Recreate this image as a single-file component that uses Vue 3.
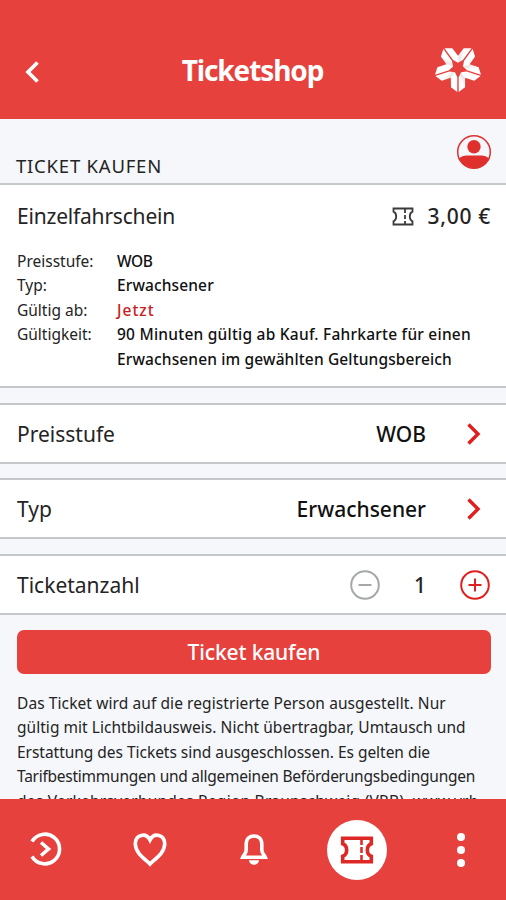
<script setup>
const details = [
  { label: 'Preisstufe:', lines: [{ text: 'WOB', track: -0.4 }] },
  { label: 'Typ:', lines: [{ text: 'Erwachsener', track: 0.12 }] },
  { label: 'Gültig ab:', lines: [{ text: 'Jetzt', track: 1 }], accent: true },
  {
    label: 'Gültigkeit:',
    lines: [
      { text: '90 Minuten gültig ab Kauf. Fahrkarte für einen', track: 0.23 },
      { text: 'Erwachsenen im gewählten Geltungsbereich', track: 0.13 },
    ],
  },
]
const options = [
  { label: 'Preisstufe', value: 'WOB' },
  { label: 'Typ', value: 'Erwachsener' },
]
const notice = [
  { text: 'Das Ticket wird auf die registrierte Person ausgestellt. Nur', track: 0.09 },
  { text: 'gültig mit Lichtbildausweis. Nicht übertragbar, Umtausch und', track: 0.04 },
  { text: 'Erstattung des Tickets sind ausgeschlossen. Es gelten die', track: -0.03 },
  { text: 'Tarifbestimmungen und allgemeinen Beförderungsbedingungen', track: -0.25 },
  { text: 'des Verkehrsverbundes Region Braunschweig (VRB), www.vrb', track: 0.24 },
]
const arms = [0, 72, 144, 216, 288]
</script>

<template>
  <div class="screen">
    <header class="topbar">
      <svg class="back" width="20" height="24" viewBox="0 0 20 24"><path d="M15.500 2.500 6 12l9.500 9.500" /></svg>
      <h1>Ticketshop</h1>
      <svg class="logo" width="50" height="50" viewBox="-25 -25 50 50">
        <defs>
          <linearGradient id="fold" x1="0" x2="1" y1="0" y2="0">
            <stop offset="0" stop-color="#fff" />
            <stop offset=".48" stop-color="#fff" />
            <stop offset=".54" stop-color="#ebe4e3" />
            <stop offset=".7" stop-color="#fff" />
          </linearGradient>
        </defs>
        <path
          v-for="a in arms"
          :key="a"
          :transform="`rotate(${a})`"
          fill="url(#fold)"
          d="M13.500-19.800H5.700L0-12.200-5.700-19.800h-7.800L-4.900-7.900 0-5.200 4.900-7.900Z"
        />
      </svg>
    </header>

    <main class="content">
      <div class="section-head">
        <h2>TICKET KAUFEN</h2>
        <svg class="avatar" width="36" height="36" viewBox="0 0 36 36">
          <circle cx="18" cy="18" r="16.300" />
          <circle class="solid" cx="18" cy="12.700" r="6.700" />
          <path class="solid" d="M3 24.500Q6 21.500 11 21.500H25Q30 21.500 33 24.500A16.400 16.400 0 0 1 3 24.500Z" />
        </svg>
      </div>

      <section class="summary">
        <div class="summary-top">
          <span class="product">Einzelfahrschein</span>
          <svg class="ticket-small" width="22" height="19" viewBox="0 0 22 19">
            <path d="M1.500 1.500h19v3.200c-3.600 1.500-3.600 8.100 0 9.600v3.200h-19v-3.200c3.600-1.500 3.600-8.100 0-9.600Z" />
            <path class="dash" d="M13 2v15" />
          </svg>
          <span class="price">3,00 €</span>
        </div>
        <dl>
          <div v-for="d in details" :key="d.label" class="detail">
            <dt>{{ d.label }}</dt>
            <dd :class="{ accent: d.accent }">
              <span v-for="l in d.lines" :key="l.text" :style="{ letterSpacing: l.track + 'px' }">{{ l.text }}</span>
            </dd>
          </div>
        </dl>
      </section>

      <section v-for="o in options" :key="o.label" class="row">
        <span class="label">{{ o.label }}</span>
        <span class="value">{{ o.value }}</span>
        <svg class="chevron" width="18" height="24" viewBox="0 0 18 24"><path d="M3.500 2.500 13 12 3.500 21.500" /></svg>
      </section>

      <section class="row count">
        <span class="label">Ticketanzahl</span>
        <svg class="minus" width="32" height="32" viewBox="0 0 32 32"><circle cx="16" cy="16" r="13.800" /><path d="M9.500 16h13" /></svg>
        <span class="amount">1</span>
        <svg class="plus" width="32" height="32" viewBox="0 0 32 32"><circle cx="16" cy="16" r="13.800" /><path d="M9.500 16h13M16 9.500v13" /></svg>
      </section>

      <button class="buy">Ticket kaufen</button>
      <p class="notice">
        <span v-for="l in notice" :key="l.text" :style="{ letterSpacing: l.track + 'px' }">{{ l.text }}</span>
      </p>
    </main>

    <nav class="tabs">
      <span class="tab">
        <svg width="36" height="36" viewBox="0 0 36 36">
          <path d="M4 9.500A14.800 14.800 0 1 1 4 24.500" />
          <path d="M13 10.500l7.500 6.500-7.500 6.500" />
        </svg>
      </span>
      <span class="tab">
        <svg width="36" height="36" viewBox="0 0 36 36">
          <path d="M18 32C14 27.500 3.300 21.500 3.300 11.800 3.300 2.500 14 0 18 8 22 0 32.700 2.500 32.700 11.800 32.700 21.500 22 27.500 18 32Z" />
        </svg>
      </span>
      <span class="tab">
        <svg width="36" height="36" viewBox="0 0 36 36">
          <path d="M10.200 18V12C10.200 6.500 13.500 4 18 4S25.800 6.500 25.800 12V18C25.800 21.500 28.300 22.500 29.300 25.200H6.700C7.700 22.500 10.200 21.500 10.200 18Z" />
          <path class="clapper" d="M12.800 28.300h10.400c-1.200 6-9.200 6-10.400 0Z" />
        </svg>
      </span>
      <span class="tab active">
        <svg width="36" height="32" viewBox="0 0 36 32">
          <path d="M3.700 4.300h28.600v5.400c-5.300 2-5.300 10.600 0 12.600v5.400H3.700v-5.400c5.300-2 5.300-10.600 0-12.600Z" />
          <path class="dash" d="M22.500 5v22" />
        </svg>
      </span>
      <span class="tab">
        <svg class="more" width="36" height="36" viewBox="0 0 36 36">
          <circle cx="18" cy="5" r="4" /><circle cx="18" cy="18" r="4" /><circle cx="18" cy="31" r="4" />
        </svg>
      </span>
    </nav>
  </div>
</template>

<style>
body {
  margin: 0;
}
</style>

<style scoped>
.screen {
  box-sizing: border-box;
  width: 506px;
  height: 900px;
  display: flex;
  flex-direction: column;
  overflow: hidden;
  background: #f5f7fb;
  color: #242424;
  font-family: 'Noto Sans', sans-serif;
}
svg {
  display: block;
  flex: none;
  fill: none;
}
.topbar {
  box-sizing: border-box;
  flex: none;
  height: 119px;
  padding: 20px 23px 0 22px;
  display: grid;
  grid-template-columns: 50px 1fr 50px;
  align-items: center;
  background: #e6413d;
}
.back {
  margin-top: 4px;
}
.back path {
  stroke: #fff;
  stroke-width: 3.700;
}
.logo {
  margin-top: -3px;
}
h1 {
  margin: 1px 0 0;
  text-align: center;
  color: #fff;
  font-size: 28px;
  line-height: 36px;
  font-weight: 700;
  letter-spacing: -1.100px;
}
.content {
  flex: 1;
  min-height: 0;
  overflow: hidden;
}
.section-head {
  box-sizing: border-box;
  height: 65px;
  padding: 15px 14px 0 16px;
  display: flex;
  justify-content: space-between;
}
h2 {
  margin: 20px 0 0;
  font-size: 18.500px;
  line-height: 24px;
  font-weight: 400;
  letter-spacing: 0.780px;
}
.avatar circle {
  stroke: #df302e;
  stroke-width: 1.500;
}
.avatar .solid {
  fill: #df302e;
  stroke: none;
}
.summary,
.row {
  box-sizing: border-box;
  background: #fff;
  border: solid #c5c8cb;
  border-width: 2px 0;
}
.summary {
  height: 205px;
  padding: 13px 16px 0 17px;
  margin-top: -1px;
}
.summary-top {
  height: 36px;
  display: flex;
  align-items: center;
  font-size: 21px;
}
.product {
  flex: 1;
  letter-spacing: -0.200px;
}
.ticket-small {
  margin-right: 14px;
}
.ticket-small path {
  stroke: #3b3b3b;
  stroke-width: 1.800;
}
.ticket-small .dash {
  stroke-dasharray: 4 2;
}
.price {
  font-weight: 500;
  letter-spacing: 0.700px;
  margin-right: -1px;
}
dl {
  margin: 15px 0 0;
  font-size: 15.500px;
  line-height: 24.400px;
}
.detail {
  display: flex;
}
dt {
  width: 100px;
  flex: none;
}
dd {
  margin: 0;
  font-weight: 500;
  color: #111;
  white-space: nowrap;
}
dd span {
  display: block;
}
.detail .accent {
  color: #c62121;
}
.row {
  height: 61px;
  margin-top: 15px;
  padding: 0 23px 0 17px;
  display: flex;
  align-items: center;
  font-size: 21px;
}
.row + .row {
  margin-top: 14px;
}
.row + .count {
  margin-top: 15px;
}
.label {
  flex: 1;
}
.value {
  font-weight: 500;
  color: #111;
}
.chevron {
  margin-left: 39px;
}
.chevron path {
  stroke: #e01f1c;
  stroke-width: 3.400;
}
.count {
  padding-right: 15px;
}
.minus circle,
.minus path {
  stroke: #a5a8aa;
  stroke-width: 2;
}
.plus circle,
.plus path {
  stroke: #df201e;
  stroke-width: 2;
}
.amount {
  width: 78px;
  text-align: center;
  font-weight: 500;
}
.buy {
  display: block;
  width: 474px;
  height: 44px;
  margin: 15px 0 0 17px;
  padding: 0;
  border: 0;
  border-radius: 7px;
  background: #e6413d;
  color: #fff;
  font: 500 21px/42px 'Noto Sans', sans-serif;
  letter-spacing: -0.150px;
}
.notice {
  margin: 17px 0 0 17px;
  font-size: 15.500px;
  line-height: 24.400px;
  white-space: nowrap;
}
.notice span {
  display: block;
}
.tabs {
  flex: none;
  box-sizing: border-box;
  height: 101px;
  padding: 0 15px 0 16px;
  display: flex;
  align-items: center;
  justify-content: space-between;
  background: #e6413d;
}
.tab {
  width: 60px;
  height: 60px;
  display: flex;
  align-items: center;
  justify-content: center;
}
.tab path {
  stroke: #fff;
  stroke-width: 3.600;
}
.tab .clapper,
.more circle {
  fill: #fff;
  stroke: none;
}
.active {
  border-radius: 50%;
  background: #fff;
}
.active path {
  stroke: #dd2826;
}
.active .dash {
  stroke-width: 2.500;
  stroke-dasharray: 6 2;
}
</style>
